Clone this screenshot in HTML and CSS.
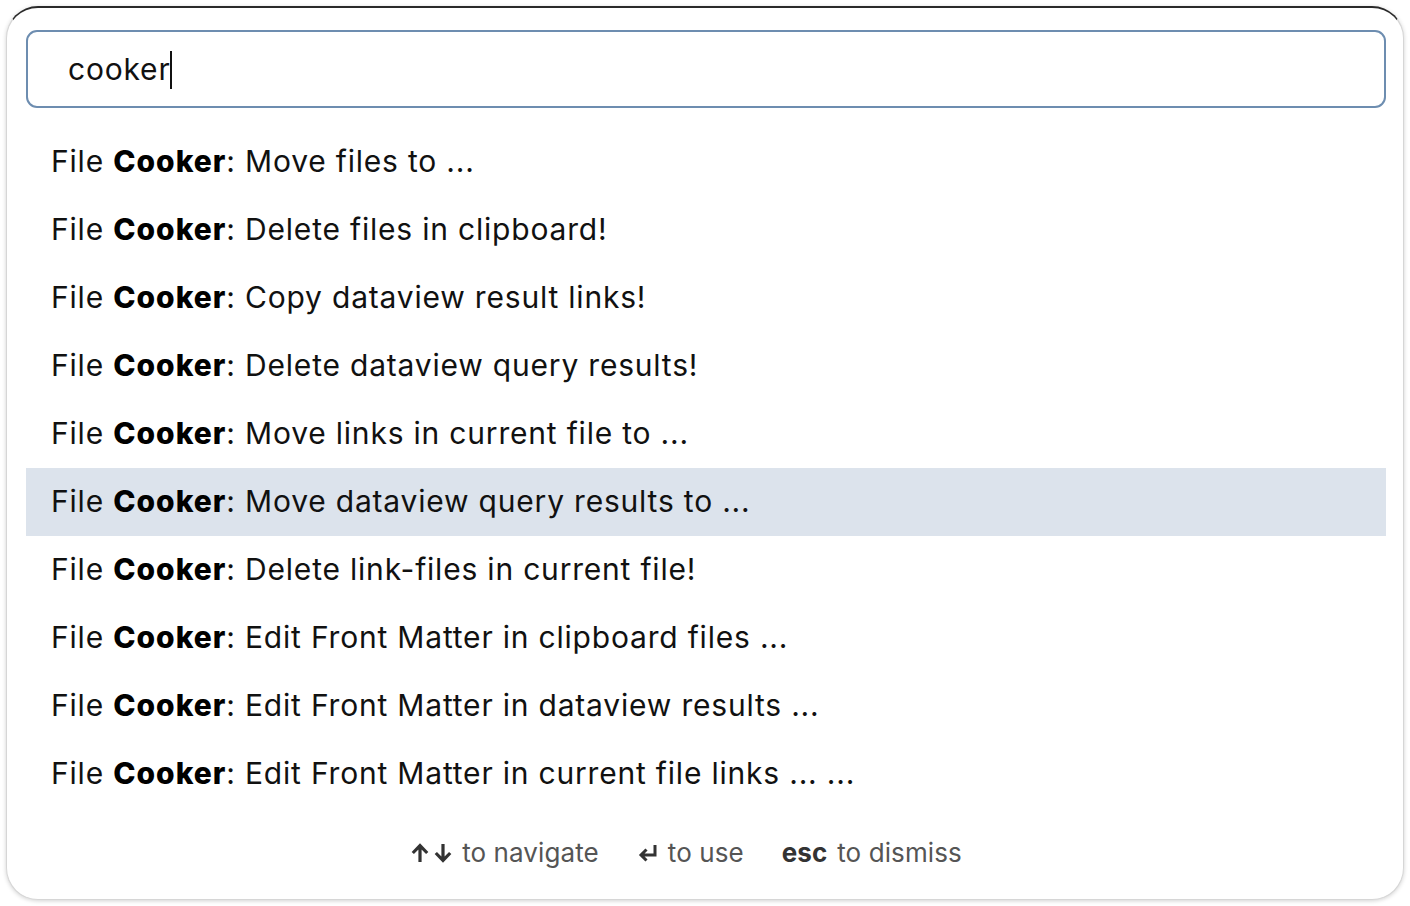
FILE: index.html
```html
<!DOCTYPE html>
<html>
<head>
<meta charset="utf-8">
<link rel="stylesheet" href="styles.css">
</head>
<body>
<div class="modal">
  <div class="search">
    <span class="query">cooker</span><span class="caret"></span>
  </div>
  <ul class="results">
    <li class="item">File <b>Cooker</b>: Move files to ...</li>
    <li class="item">File <b>Cooker</b>: Delete files in clipboard!</li>
    <li class="item">File <b>Cooker</b>: Copy dataview result links!</li>
    <li class="item">File <b>Cooker</b>: Delete dataview query results!</li>
    <li class="item">File <b>Cooker</b>: Move links in current file to ...</li>
    <li class="item selected">File <b>Cooker</b>: Move dataview query results to ...</li>
    <li class="item">File <b>Cooker</b>: Delete link-files in current file!</li>
    <li class="item">File <b>Cooker</b>: Edit Front Matter in clipboard files ...</li>
    <li class="item">File <b>Cooker</b>: Edit Front Matter in dataview results ...</li>
    <li class="item">File <b>Cooker</b>: Edit Front Matter in current file links ... ...</li>
  </ul>
  <div class="footer">
    <span class="hint"><span class="key arrows">
      <svg width="18" height="20" viewBox="0 0 18 20"><path d="M9 19V3M1.8 10L9 2.6 16.2 10" fill="none" stroke="#333" stroke-width="3.2"/></svg><svg width="18" height="20" viewBox="0 0 18 20"><path d="M9 1v16M1.8 10L9 17.4 16.2 10" fill="none" stroke="#333" stroke-width="3.2"/></svg>
    </span> to navigate</span>
    <span class="hint"><span class="key"><svg width="21" height="20" viewBox="0 0 21 20"><path d="M18 2v10H4M9.5 6.5L4 12l5.5 5.5" fill="none" stroke="#333" stroke-width="3"/></svg></span> to use</span>
    <span class="hint"><b class="esc">esc</b> to dismiss</span>
  </div>
</div>
</body>
</html>
```
FILE: styles.css
```css
* { box-sizing: border-box; }
html, body { margin: 0; padding: 0; background: #ffffff; }
body {
  width: 1410px;
  height: 906px;
  padding: 6px;
  font-family: Inter, "Noto Sans", sans-serif;
  color: #1a1a1a;
}
.modal {
  width: 1398px;
  height: 894px;
  background: #fff;
  border: 1px solid #d6d6d6;
  border-top: 2px solid #2a2a2a;
  border-radius: 32px;
  box-shadow: 0 1px 4px rgba(0,0,0,0.18);
  padding: 22px 17px 0 19px;
  display: flex;
  flex-direction: column;
}
.search {
  height: 78px;
  border: 2px solid #6d8db0;
  border-radius: 11px;
  display: flex;
  align-items: center;
  padding-left: 40px;
  font-size: 30px;
  letter-spacing: 0.8px;
  color: #111;
}
.caret {
  display: inline-block;
  width: 2px;
  height: 38px;
  background: #111;
  margin-left: -1px;
  transform: translateY(1px);
}
.results {
  list-style: none;
  margin: 20px 0 0 0;
  padding: 0;
}
.item {
  height: 68px;
  display: flex;
  align-items: center;
  padding-left: 25px;
  padding-bottom: 3px;
  font-size: 30px;
  letter-spacing: 0.8px;
  color: #111;
  white-space: pre;
}
.item b { font-weight: 800; color: #000; letter-spacing: 1px; }
.item.selected { background: #dce3ec; }
.footer {
  margin-top: 29px;
  display: flex;
  justify-content: center;
  gap: 38px;
  font-size: 26px;
  letter-spacing: 0.1px;
  color: #555;
  padding-right: 39px;
}
.hint { display: flex; align-items: center; gap: 10px; }
.key { display: flex; align-items: center; gap: 5px; }
.esc { font-weight: 700; color: #333; letter-spacing: 0; }
```
